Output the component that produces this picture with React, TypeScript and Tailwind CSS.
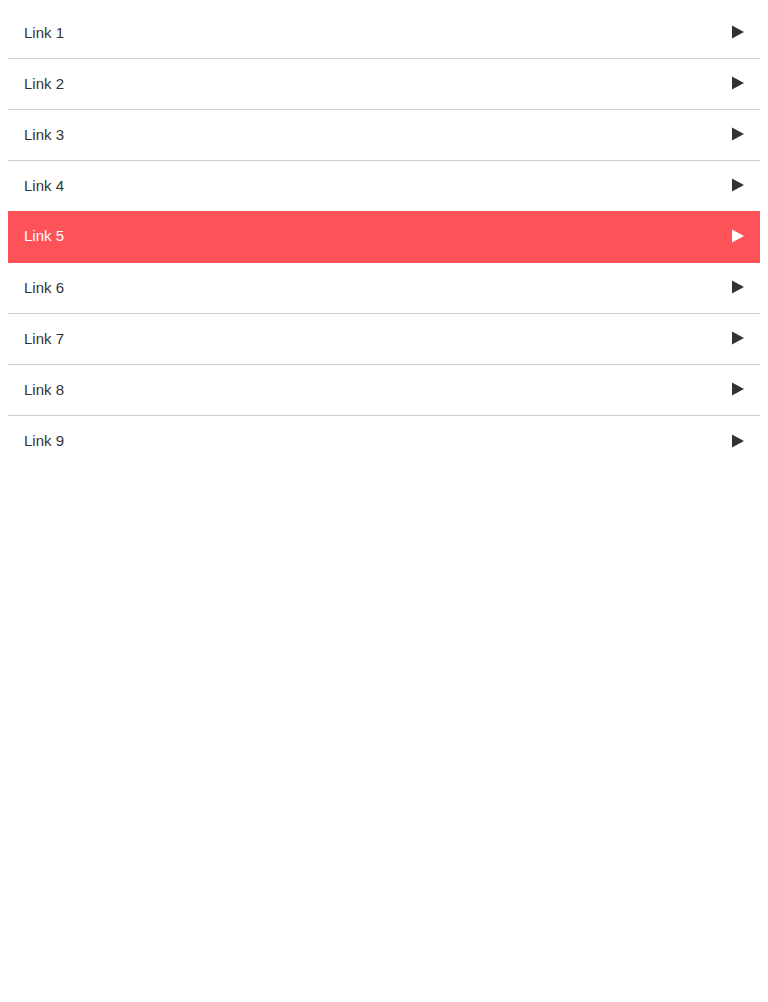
const links = ["Link 1", "Link 2", "Link 3", "Link 4", "Link 5", "Link 6", "Link 7", "Link 8", "Link 9"]

function Arrow({ active }: { active: boolean }) {
  return (
    <svg width="12" height="14" viewBox="0 0 12 14" className={active ? "fill-white" : "fill-[#333]"}>
      <path d="M0 0.5 L12 7 L0 13.5 Z" />
    </svg>
  )
}

export default function App() {
  return (
    <div className="bg-white min-h-screen p-2" style={{ fontFamily: '"Liberation Sans", Arial, sans-serif' }}>
      <ul>
        {links.map((label, i) => {
          const active = i === 4
          const last = i === links.length - 1
          return (
            <li
              key={label}
              className={
                active
                  ? "relative -mt-px h-[52px] bg-[#ff535a] border-b border-[#ff535a] text-white flex items-center justify-between pl-4 pr-4 pb-[2px]"
                  : last
                  ? "h-[51px] text-[#333] flex items-center justify-between pl-4 pr-4 pb-[2px]"
                  : "h-[51px] border-b border-[#cccccc] text-[#333] flex items-center justify-between pl-4 pr-4 pb-[2px]"
              }
            >
              <span className="text-[15px] leading-none">{label}</span>
              <Arrow active={active} />
            </li>
          )
        })}
      </ul>
    </div>
  )
}
